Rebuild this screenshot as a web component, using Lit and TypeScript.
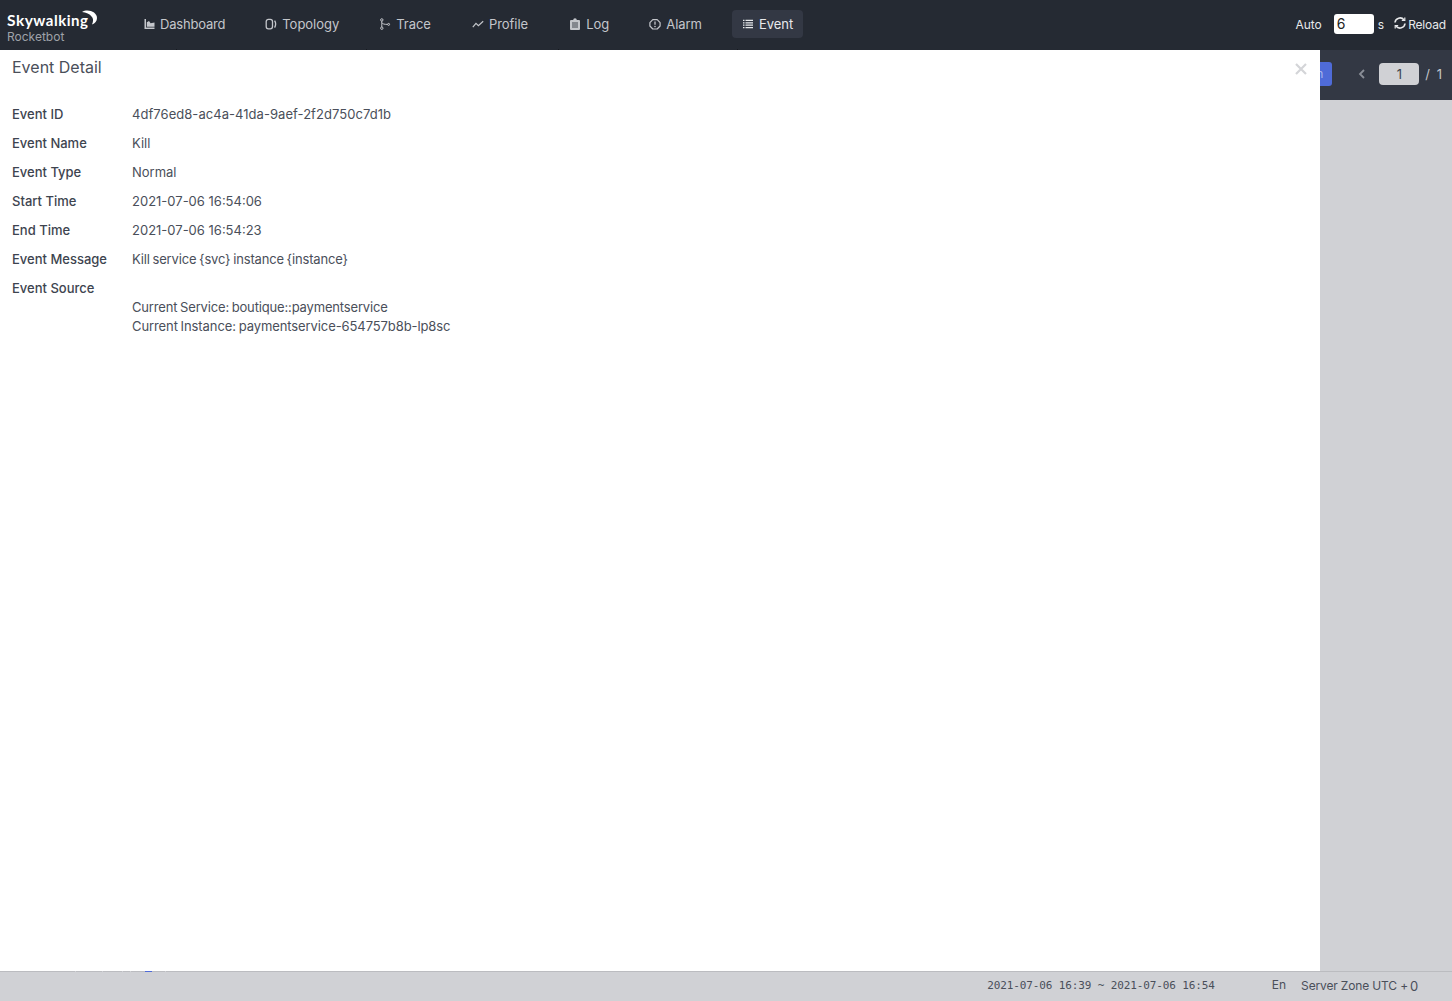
import { LitElement, html, css, svg } from "lit";
import { customElement } from "lit/decorators.js";

const icons: Record<string, unknown> = {
  Dashboard: svg`<path d="M1.500 1v10h10V9.600H3V1z" fill="currentColor"/><path d="M3.800 8.800V4.200L6 2.900l1.600 2.400 3.900-.9v4.400z" fill="currentColor"/>`,
  Topology: svg`<rect x="1.200" y="1.400" width="6.300" height="9.400" rx="2.200" fill="none" stroke="currentColor" stroke-width="1.300"/><path d="M9.600 2.600c1.400 2.200 1.400 4.600 0 7" fill="none" stroke="currentColor" stroke-width="1.300"/>`,
  Trace: svg`<circle cx="2.800" cy="1.900" r="1.200" fill="none" stroke="currentColor"/><circle cx="2.800" cy="10.200" r="1.200" fill="none" stroke="currentColor"/><circle cx="9.600" cy="6.400" r="1" fill="none" stroke="currentColor"/><path d="M2.800 3v6M2.800 4.600c.6 1.400 2.600 1.800 5.800 1.800" fill="none" stroke="currentColor"/>`,
  Profile: svg`<path d="M.8 9.200 4 5.400l2.400 2.200 4.800-4.400" fill="none" stroke="currentColor" stroke-width="1.200"/>`,
  Log: svg`<path d="M2 2h2.200a1.800 1.800 0 0 1 3.600 0H10a1 1 0 0 1 1 1v8a1 1 0 0 1-1 1H2a1 1 0 0 1-1-1V3a1 1 0 0 1 1-1z" fill="currentColor"/><path d="M3 5h6M3 7h6M3 9h6" stroke="#252a33" stroke-width=".8"/>`,
  Alarm: svg`<path d="M3.800 1.400h4.400l2.900 3v3.400l-2.900 3H3.800l-2.900-3V4.400z" fill="none" stroke="currentColor" stroke-width="1.200" transform="translate(0 .2)" stroke-linejoin="round"/><path d="M6 3.400v3.400" stroke="currentColor" stroke-width="1.300"/><circle cx="6" cy="8.500" r=".8" fill="currentColor"/>`,
  Event: svg`<path d="M1 2.400h1.500M3.500 2.400H11M1 4.800h1.500M3.500 4.800H11M1 7.200h1.500M3.500 7.200H11M1 9.600h1.500M3.500 9.600H11" stroke="currentColor" stroke-width="1.300"/>`,
};

const rows = [
  ["Event ID", "4df76ed8-ac4a-41da-9aef-2f2d750c7d1b", "id"],
  ["Event Name", "Kill", ""],
  ["Event Type", "Normal", ""],
  ["Start Time", "2021-07-06 16:54:06", ""],
  ["End Time", "2021-07-06 16:54:23", ""],
  ["Event Message", "Kill service {svc} instance {instance}", "prose"],
];

const navTicks = [176, 366, 558, 737];
const footTicks = [75, 102, 122, 130, 165];

@customElement("app-root")
export class AppRoot extends LitElement {
  static styles = css`
    :host {
      display: flex;
      flex-direction: column;
      position: relative;
      height: 1001px;
      overflow: hidden;
      background: #d0d1d5;
      font-family: Inter, "Noto Sans", sans-serif;
      font-size: 13px;
      color: #3d444f;
    }
    .nav {
      height: 50px;
      flex: none;
      background: #252a33;
      display: flex;
      align-items: center;
      color: #c4c6cb;
      box-sizing: border-box;
      padding-bottom: 2px;
    }
    .logo {
      width: 133px;
      position: relative;
      height: 50px;
      flex: none;
      align-self: flex-start;
    }
    .logo-main {
      position: absolute;
      left: 7px;
      top: 11px;
      font-family: Lato, sans-serif;
      font-size: 15px;
      font-weight: 700;
      letter-spacing: 0.5px;
      color: #fff;
      line-height: 18px;
    }
    .logo-main b { font-size: 15.500px; font-weight: 700; letter-spacing: 0.5px; line-height: 16px; }
    .logo-sub {
      position: absolute;
      left: 7px;
      top: 31px;
      font-size: 12px;
      line-height: 12px;
      color: #9fa2a9;
    }
    .moon {
      position: absolute;
      left: 82px;
      top: 9px;
    }
    .item {
      display: flex;
      align-items: center;
      height: 28px;
      padding: 0 10px;
      margin-right: 20px;
      gap: 5px;
      border-radius: 4px;
      letter-spacing: -0.03px;
    }
    .item svg { width: 12px; height: 12px; flex: none; }
    .item.active { background: #333844; color: #e8e9eb; }
    .item-Dashboard { letter-spacing: -0.2px; }
    .item-Trace, .item-Profile { margin-right: 21px; }
    .right {
      margin-left: auto;
      display: flex;
      align-items: center;
      color: #e8e9eb;
      padding-right: 6px;
      font-size: 12px;
    }
    .auto-input {
      width: 40px;
      height: 20px;
      background: #fff;
      border-radius: 3px;
      margin: 0 4px 0 12px;
      color: #222;
      font-size: 14px;
      line-height: 20px;
      padding-left: 3px;
      box-sizing: border-box;
    }
    .reload { display: flex; align-items: center; margin-left: 9px; letter-spacing: -0.17px; }
    .reload svg { width: 14px; height: 14px; margin-right: 1px; margin-top: -3px; }
    .sub {
      height: 50px;
      flex: none;
      box-sizing: border-box;
      background: #333844;
      display: flex;
      align-items: center;
      justify-content: flex-end;
      padding: 0 10px 2px 0;
      color: #c4c6cb;
    }
    .search {
      height: 24px;
      line-height: 24px;
      padding: 0 9px;
      border-radius: 3px;
      background: #4f6bd8;
      color: #a9b7ec;
      font-size: 12px;
    }
    .chev { width: 8px; height: 10px; margin: 0 13px 0 26px; }
    .page {
      width: 40px;
      height: 22px;
      line-height: 22px;
      background: #d0d1d5;
      border-radius: 4px;
      text-align: center;
      color: #3d444f;
      margin-right: 6px;
    }
    .of { font-size: 13px; word-spacing: 3px; }
    .main { flex: 1; }
    .footer {
      height: 30px;
      flex: none;
      box-sizing: border-box;
      border-top: 1px solid #bbbcc0;
      display: flex;
      align-items: center;
      justify-content: flex-end;
      padding: 0 34px 2px 0;
      font-size: 12px;
      color: #4a4f5a;
    }
    .time {
      font-family: "DejaVu Sans Mono", monospace;
      font-size: 11px;
      letter-spacing: -0.12px;
      margin-right: 57px;
    }
    .lang { margin: 0 15px 2px 0; }
    .zone { letter-spacing: -0.15px; margin-bottom: 2px; }
    .zero { font-size: 13px; margin-left: 2px; position: relative; top: 1px; }
    .drawer {
      position: absolute;
      left: 0;
      top: 50px;
      width: 1320px;
      height: 921px;
      background: #fff;
      box-sizing: border-box;
      padding: 6px 12px;
    }
    .title {
      font-size: 16px;
      line-height: 22px;
      color: #4a4f5a;
      margin-bottom: 22px;
    }
    .close {
      position: absolute;
      right: 12px;
      top: 12px;
      width: 14px;
      height: 14px;
    }
    .row {
      display: flex;
      height: 29px;
      line-height: 29px;
    }
    .label { width: 120px; flex: none; font-weight: 500; color: #3d444f; }
    .value { color: #4a4f5a; }
    .id { letter-spacing: 0.05px; }
    .prose { letter-spacing: -0.16px; word-spacing: -0.8px; }
    .prose-hy { letter-spacing: -0.09px; word-spacing: -0.8px; }
    .source { margin: -5px 0 0 120px; line-height: 19px; color: #4a4f5a; }
    .tick { position: absolute; width: 1px; height: 1px; top: 49px; background: #16191f; }
    .foot-tick { position: absolute; width: 1px; height: 1px; top: 971px; background: #d0d1d5; }
    .foot-blue { position: absolute; left: 145px; width: 7px; height: 1px; top: 971px; background: #4f6bd8; }
  `;

  render() {
    return html`
      <div class="nav">
        <div class="logo">
          <span class="logo-main"><b>Sky</b>walking</span>
          <svg class="moon" width="16" height="16" viewBox="0 0 16 16">
            <path d="M0 3C6-.5 15 3 15 9c0 3-2 5.500-5 6.500 1.500-3.500 1.500-6-.5-8C8 5 4 3.500 0 3z" fill="#fff"/>
          </svg>
          <span class="logo-sub">Rocketbot</span>
        </div>
        ${Object.keys(icons).map(
          (k) => html`<div class="item item-${k} ${k === "Event" ? "active" : ""}">
            <svg viewBox="0 0 12 12">${icons[k]}</svg><span>${k}</span>
          </div>`
        )}
        <div class="right">
          <span>Auto</span>
          <div class="auto-input">6</div>
          <span>s</span>
          <div class="reload">
            <svg viewBox="0 0 14 14" fill="none" stroke="currentColor" stroke-width="1.600">
              <path d="M2 6.500A5 5 0 0 1 11 4"/><path d="M12 7.500A5 5 0 0 1 3 10"/>
              <path d="M11.800 1.500V4.500H8.800M2.200 12.500V9.500H5.200" stroke-width="1.200"/>
            </svg>
            <span>Reload</span>
          </div>
        </div>
      </div>
      <div class="sub">
        <div class="search">Search</div>
        <svg class="chev" viewBox="0 0 8 10" fill="none" stroke="#8a8e97" stroke-width="1.800"><path d="M6 1 2 5l4 4"/></svg>
        <div class="page">1</div>
        <span class="of">/ 1</span>
      </div>
      <div class="main"></div>
      <div class="footer">
        <span class="time">2021-07-06 16:39 ~ 2021-07-06 16:54</span>
        <span class="lang">En</span>
        <span class="zone">Server Zone UTC +<span class="zero">0</span></span>
      </div>
      <div class="drawer">
        <div class="title">Event Detail</div>
        <svg class="close" viewBox="0 0 14 14" stroke="#d4d5d8" stroke-width="2.200"><path d="M2 2l10 10M12 2 2 12"/></svg>
        ${rows.map(
          ([l, v, c]) => html`<div class="row"><span class="label">${l}</span><span class="value ${c}">${v}</span></div>`
        )}
        <div class="row"><span class="label">Event Source</span></div>
        <div class="source">
          <div class="prose">Current Service: boutique::paymentservice</div>
          <div class="prose-hy">Current Instance: paymentservice-654757b8b-lp8sc</div>
        </div>
      </div>
      ${navTicks.map((x) => html`<i class="tick" style="left:${x}px"></i>`)}
      ${footTicks.map((x) => html`<i class="foot-tick" style="left:${x}px"></i>`)}
      <i class="foot-blue"></i>
    `;
  }
}
